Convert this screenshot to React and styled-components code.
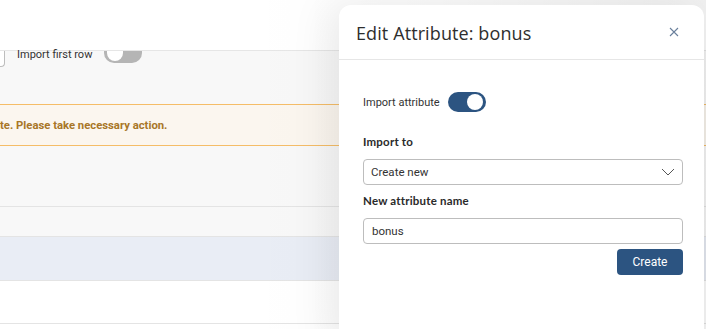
import React from 'react'
import styled, { createGlobalStyle } from 'styled-components'

const GlobalStyle = createGlobalStyle`
  * { box-sizing: border-box; }
  html, body { margin: 0; padding: 0; }
  body {
    font-family: Roboto, "Liberation Sans", sans-serif;
    background: #ffffff;
    overflow: hidden;
  }
`

const Page = styled.div`
  position: relative;
  width: 706px;
  height: 329px;
  overflow: hidden;
  background: #ffffff;
`

const TopBar = styled.div`
  height: 51px;
  background: #ffffff;
  border-bottom: 1px solid #e6e6e6;
`

const Options = styled.div`
  display: flex;
  align-items: flex-start;
  height: 53px;
  background: #f8f8f8;
`

const CutSelect = styled.div`
  width: 5px;
  height: 16px;
  border: 1px solid #bdbdbd;
  border-top: none;
  border-left: none;
  border-radius: 0 0 4px 0;
  background: #ffffff;
`

const OptionLabel = styled.span`
  margin: 0 12px;
  font-size: 11px;
  line-height: 12px;
  color: #333333;
  position: relative;
  top: -2px;
`

const Toggle = styled.div`
  position: relative;
  width: 38px;
  height: ${(p) => (p.$small ? 12 : 20)}px;
  border-radius: ${(p) => (p.$small ? '0 0 10px 10px' : '10px')};
  background: ${(p) => (p.$on ? '#2c5481' : '#b5b5b5')};
  &::after {
    content: '';
    position: absolute;
    top: ${(p) => (p.$small ? 0 : 2)}px;
    ${(p) => (p.$on ? 'right: 3px;' : 'left: 3px;')}
    width: 16px;
    height: ${(p) => (p.$small ? 10 : 16)}px;
    border-radius: ${(p) => (p.$small ? '0 0 8px 8px' : '50%')};
    background: #ffffff;
  }
`

const Warning = styled.div`
  height: 42px;
  display: flex;
  align-items: center;
  background: #fbf6ef;
  border-top: 1px solid #f5bd68;
  border-bottom: 1px solid #f5bd68;
  font-size: 11.3px;
  font-weight: 700;
  color: #a87628;
`

const Gap = styled.div`
  height: 61px;
  background: #f8f8f8;
  border-bottom: 1px solid #e4e4e4;
`

const Row = styled.div`
  height: ${(p) => p.$h}px;
  background: ${(p) => p.$bg};
  border-bottom: 1px solid #e4e4e4;
`

const Shade = styled.div`
  position: absolute;
  top: 0;
  right: 0;
  width: 460px;
  height: 100%;
  background: linear-gradient(to right, rgba(0,0,0,0) 0%, rgba(0,0,0,0.015) 40%, rgba(0,0,0,0.06) 100%);
  pointer-events: none;
`

const Drawer = styled.div`
  position: absolute;
  top: 5px;
  left: 339px;
  right: 2px;
  bottom: -20px;
  background: #ffffff;
  border-radius: 12px 12px 0 0;
  box-shadow: -10px 0 40px rgba(0, 0, 0, 0.08);
  display: flex;
  flex-direction: column;
`

const DrawerHead = styled.div`
  height: 55px;
  display: flex;
  align-items: center;
  justify-content: space-between;
  padding: 0 25px 0 17px;
  border-bottom: 1px solid #e6e6e6;
`

const Title = styled.h2`
  margin: 0;
  font-family: "Open Sans", "DejaVu Sans", sans-serif;
  font-weight: 400;
  font-size: 18px;
  letter-spacing: 0.1px;
  color: #2e2e2e;
  padding-top: 1px;
`

const Close = styled.button`
  border: none;
  background: none;
  padding: 0;
  width: 10px;
  height: 10px;
  display: flex;
  cursor: pointer;
`

const Body = styled.div`
  padding: 32px 21px 0 24px;
  display: flex;
  flex-direction: column;
`

const InlineField = styled.div`
  display: flex;
  align-items: center;
  gap: 8px;
  font-size: 11px;
  color: #333333;
  margin-bottom: 23px;
`

const Label = styled.div`
  font-family: Lato, "Liberation Sans", sans-serif;
  font-weight: 700;
  font-size: 11.5px;
  color: #2a2a2a;
  letter-spacing: 0.2px;
  margin-bottom: 11px;
`

const Select = styled.div`
  height: 26px;
  border: 1px solid #bdbdbd;
  border-radius: 4px;
  display: flex;
  align-items: center;
  justify-content: space-between;
  padding: 0 7px;
  font-size: 11.5px;
  color: #333333;
  margin-bottom: 9px;
`

const Input = styled.input`
  height: 26px;
  border: 1px solid #bdbdbd;
  border-radius: 4px;
  padding: 0 8px;
  font-family: Roboto, "Liberation Sans", sans-serif;
  font-size: 11.5px;
  color: #333333;
  outline: none;
`

const Actions = styled.div`
  display: flex;
  justify-content: flex-end;
  margin-top: 5px;
`

const Button = styled.button`
  width: 66px;
  height: 26px;
  border: none;
  border-radius: 4px;
  background: #2c5481;
  color: #ffffff;
  font-family: Roboto, "Liberation Sans", sans-serif;
  font-size: 12px;
  cursor: pointer;
`

export default function App() {
  return (
    <Page>
      <GlobalStyle />
      <TopBar />
      <Options>
        <CutSelect />
        <OptionLabel>Import first row</OptionLabel>
        <Toggle $small />
      </Options>
      <Warning>te. Please take necessary action.</Warning>
      <Gap />
      <Row $h={30} $bg="#f8f8f8" />
      <Row $h={44} $bg="#e9edf5" />
      <Row $h={43} $bg="#ffffff" />
      <Shade />
      <Drawer>
        <DrawerHead>
          <Title>Edit Attribute: bonus</Title>
          <Close aria-label="Close">
            <svg width="10" height="10" viewBox="0 0 10 10">
              <path d="M1 1L9 9M9 1L1 9" stroke="#6a7f9c" strokeWidth="1.1" />
            </svg>
          </Close>
        </DrawerHead>
        <Body>
          <InlineField>
            Import attribute
            <Toggle $on />
          </InlineField>
          <Label>Import to</Label>
          <Select>
            Create new
            <svg width="14" height="8" viewBox="0 0 14 8">
              <path d="M1 1L7 7L13 1" fill="none" stroke="#555" strokeWidth="1" />
            </svg>
          </Select>
          <Label>New attribute name</Label>
          <Input defaultValue="bonus" />
          <Actions>
            <Button>Create</Button>
          </Actions>
        </Body>
      </Drawer>
    </Page>
  )
}
